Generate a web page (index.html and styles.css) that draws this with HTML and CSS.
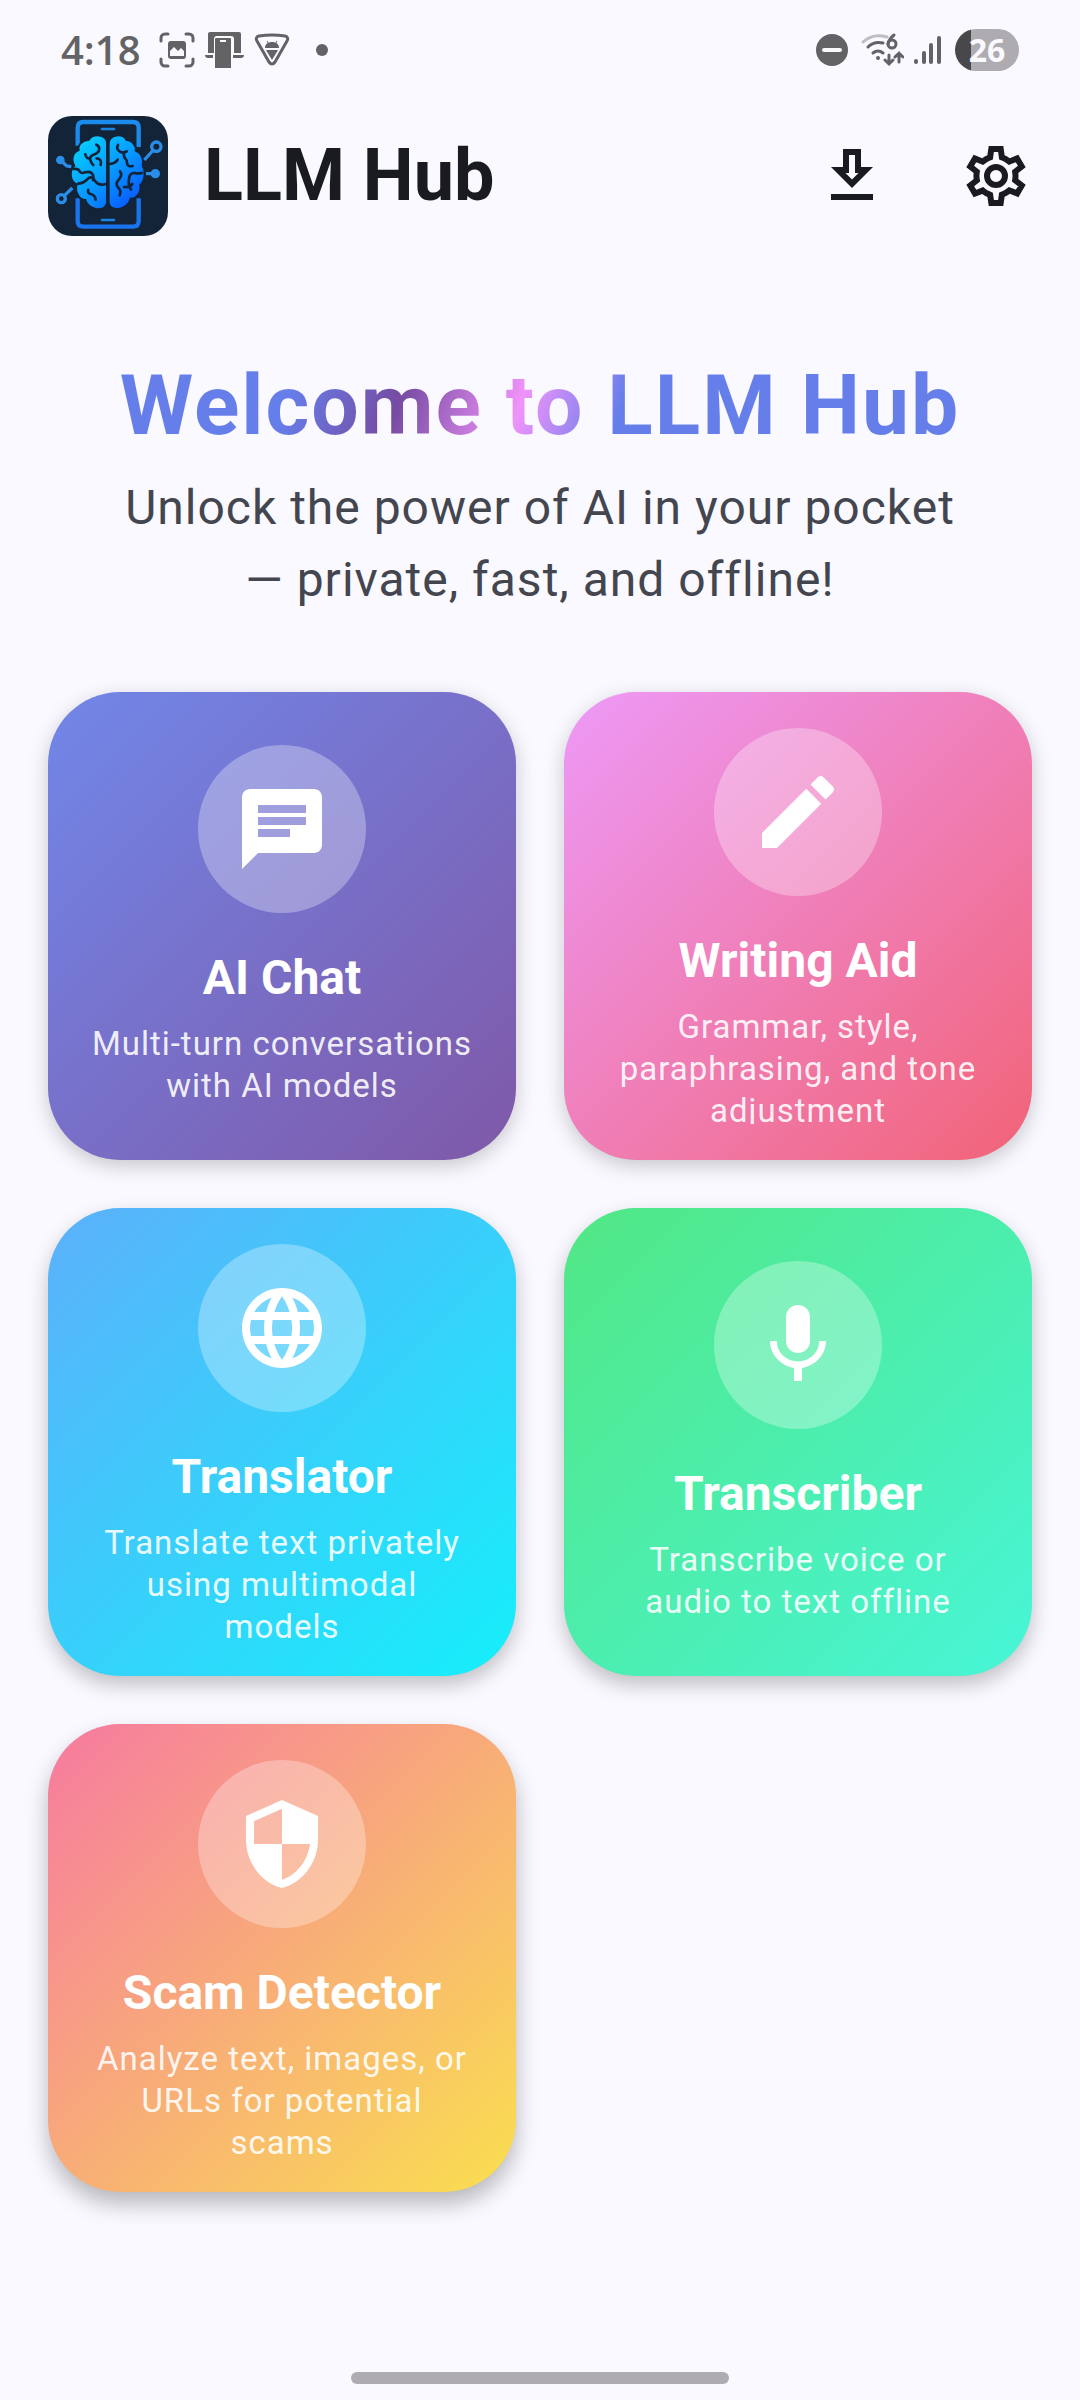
FILE: index.html
```html
<!DOCTYPE html>
<html lang="en">
<head>
<meta charset="utf-8">
<meta name="viewport" content="width=device-width, initial-scale=1">
<title>LLM Hub</title>
<link rel="stylesheet" href="styles.css">
</head>
<body>
<div class="status">
  <div class="status-group">
    <span class="clock">4:18</span>
    <svg width="36" height="36" viewBox="0 0 36 36" fill="none" stroke="currentColor" stroke-width="3" stroke-linecap="round" aria-hidden="true">
      <path d="M2 9V6a4 4 0 0 1 4-4h3M27 2h3a4 4 0 0 1 4 4v3M34 27v3a4 4 0 0 1-4 4h-3M9 34H6a4 4 0 0 1-4-4v-3"/>
      <path fill="currentColor" stroke="none" fill-rule="evenodd" d="M12 9h12a3 3 0 0 1 3 3v12a3 3 0 0 1-3 3H12a3 3 0 0 1-3-3V12a3 3 0 0 1 3-3zm-1 15h14v-5l-3-3-3 3-4-4-4 4z"/>
    </svg>
    <svg width="39" height="36" viewBox="0 0 39 36" fill="currentColor" aria-hidden="true">
      <path d="M5 0h29a2 2 0 0 1 2 2v19h-7V7a3 3 0 0 0-3-3H12a3 3 0 0 0-3 3v14H3V2a2 2 0 0 1 2-2zM0 23h8v3H3a3 3 0 0 1-3-3zM28 23h11a3 3 0 0 1-3 3h-8z"/>
      <path fill-rule="evenodd" d="M11 6h14a1 1 0 0 1 1 1v29H10V7a1 1 0 0 1 1-1zm4 2v2h6V8z"/>
    </svg>
    <svg width="36" height="34" viewBox="0 0 36 34" aria-hidden="true">
      <path fill="none" stroke="currentColor" stroke-width="3" stroke-linejoin="round" d="M5 3Q18 1 31 3Q35 4 33 8L21 29Q18 33 15 29L3 8Q1 4 5 3z"/>
      <path fill="currentColor" d="M11 15c0-4 3-6 7-6s7 2 7 6zM12 17h12l-6 10z"/>
      <path fill="none" stroke="currentColor" stroke-width="1" d="m13 8 2 3m8-3-2 3"/>
    </svg>
    <span class="dot"></span>
  </div>
  <div class="status-group">
    <svg width="32" height="32" viewBox="0 0 32 32" aria-hidden="true"><circle cx="16" cy="16" r="16" fill="currentColor"/><path d="M8 16h16" stroke="#f9f9ff" stroke-width="4" stroke-linecap="round"/></svg>
    <svg class="wifi" width="43" height="34" viewBox="0 0 43 34" fill="none" stroke="currentColor" stroke-width="3" stroke-linecap="round" aria-hidden="true">
      <path opacity=".4" d="M2 9Q12 0 26 4"/>
      <path d="M7 14Q13 8 22 10M12 20q5-4 10 0"/>
      <circle cx="17" cy="25" r="2" fill="currentColor" stroke="none"/>
      <path d="M33 2q-5 4-6 9"/><circle cx="31" cy="11" r="4"/>
      <path d="M28 22v9m-4-4 4 4 4-4M38 29v-9m-4 4 4-4 4 4"/>
    </svg>
    <svg width="27" height="32" viewBox="0 0 27 32" fill="none" stroke="currentColor" stroke-width="4" stroke-linecap="round" aria-hidden="true"><path d="M2 27v1M10 19v9M17 11v17M25 4v24"/></svg>
    <span class="battery">26</span>
  </div>
</div>

<header class="appbar">
  <svg class="logo" viewBox="24 33 360 360" aria-hidden="true">
    <defs>
      <linearGradient id="brain" gradientUnits="userSpaceOnUse" x1="110" y1="110" x2="280" y2="300"><stop offset="0" stop-color="#06d0ff"/><stop offset=".5" stop-color="#079cff"/><stop offset="1" stop-color="#0858ff"/></linearGradient>
    </defs>
    <path fill="#132338" d="M24 33h360v360H24z"/>
    <path fill="none" stroke="#1b8cec" stroke-width="13" d="M113 122V68q0-17 17-17H279q17 0 17 17V126"/>
    <path fill="none" stroke="#1a74ec" stroke-width="13" d="M113 280V348q0 17 17 17H279q17 0 17-17V280"/>
    <g fill="none" stroke="#1b84e0" stroke-width="8" stroke-linecap="round"><path d="M186 72h36M186 345h36"/></g>
    <g stroke="#132338" stroke-width="6" fill="url(#brain)">
      <path d="M201 115C201 86 158 84 146 105C128 103 112 122 116 135C98 142 92 164 103 182C86 200 90 230 110 238C103 260 118 285 136 285C140 312 194 326 201 294Z"/>
      <path d="M206 115C208 86 248 84 260 105C278 105 290 126 287 137C305 144 313 164 308 182C319 202 313 230 301 240C305 264 288 283 272 281C266 312 212 326 206 294Z"/>
    </g>
    <g fill="none" stroke="#132338" stroke-width="8" stroke-linecap="round" stroke-linejoin="round">
      <path d="M169 119q11 5 8 17-3 9-16 13-15 5-9 19 3 8 8 12M136 148q3 15 15 12M170 160q17 2 12 20M101 192q14-2 18 7 4 8 17 3 17-5 23 8 3 9 0 15M197 237q-22 7-34-12-11-16-23 0-12 11-25 11M145 255q-4 9 7 12 13 3 15 17"/>
      <path d="M234 120q-7 12 6 20 12 5 20-1M252 142q-2 14 5 20 5 4 4 13 2 11 17 8M209 177q18-2 24-13M306 204q-13 3-22 0-12-1-16 12-3 15-1 24M240 199q8 10-2 23-15 15-3 26 10 10 4 23M252 246q18 2 25-9M267 242l6 12"/>
    </g>
    <g fill="none" stroke="#2a8ee8" stroke-width="10">
      <path d="m61 165 19 18 14 2M97 249l-24 23M313 165l27-30M318 206h20"/>
      <circle cx="64" cy="281" r="12"/><circle cx="349" cy="125" r="14"/>
      <circle cx="61" cy="165" r="8" fill="#2a8ee8"/><circle cx="346" cy="206" r="9" fill="#2a8ee8"/>
    </g>
  </svg>
  <h1 class="brand">LLM Hub</h1>
  <button class="icon-button" type="button" aria-label="Download models">
    <svg viewBox="0 0 24 24" aria-hidden="true"><path fill="currentColor" d="M19 9h-4V3H9v6H5l7 7 7-7zm-8 2V5h2v6h1.170L12 13.170 9.830 11H11zm-6 7h14v2H5z"/></svg>
  </button>
  <button class="icon-button" type="button" aria-label="Settings">
    <svg viewBox="0 0 24 24" fill="none" stroke="currentColor" aria-hidden="true">
      <defs><path id="gear" d="M19.440 13c.050-.340.070-.660.070-1s-.030-.660-.070-.970l2.440-1.920-2.430-4.220-2.870 1.160c-.520-.400-1.090-.730-1.710-.980L14.440 2H9.570l-.440 3.070c-.620.260-1.190.600-1.710 1L4.550 4.890 2.110 9.110l2.440 1.920c-.040.330-.070.650-.070.970s.030.680.080 1l-2.440 1.910 2.430 4.200 2.880-1.150c.530.410 1.100.750 1.710 1L9.580 22h4.850l.440-3.070c.620-.260 1.200-.600 1.720-1l2.880 1.150 2.430-4.200z"/><clipPath id="gear-clip"><use href="#gear"/></clipPath></defs>
      <use href="#gear" stroke-width="4" clip-path="url(#gear-clip)"/>
      <circle cx="12" cy="12" r="3" stroke-width="2"/>
    </svg>
  </button>
</header>

<main class="content">
  <section class="hero">
    <h2 class="welcome">Welcome to LLM Hub</h2>
    <p class="tagline">Unlock the power of AI in your pocket — private, fast, and offline!</p>
  </section>
  <nav class="grid" aria-label="Features">
    <a class="card chat" href="#chat"><div class="card-body">
      <span class="badge"><svg viewBox="0 0 24 24" aria-hidden="true"><path d="M20 2H4c-1.100 0-2 .9-2 2v18l4-4h14c1.100 0 2-.9 2-2V4c0-1.100-.9-2-2-2zM6 9h12v2H6V9zm8 5H6v-2h8v2zm4-6H6V6h12v2z"/></svg></span>
      <h3 class="card-title">AI Chat</h3>
      <p class="card-text">Multi-turn conversations with AI models</p>
    </div></a>
    <a class="card writing" href="#writing"><div class="card-body">
      <span class="badge"><svg viewBox="0 0 24 24" aria-hidden="true"><path d="M3 17.250V21h3.750L17.810 9.940l-3.750-3.750L3 17.250zM20.710 7.040c.390-.390.390-1.020 0-1.410l-2.340-2.340c-.390-.390-1.020-.390-1.410 0l-1.830 1.830 3.750 3.750 1.830-1.830z"/></svg></span>
      <h3 class="card-title">Writing Aid</h3>
      <p class="card-text">Grammar, style, paraphrasing, and tone adjustment</p>
    </div></a>
    <a class="card translator" href="#translator"><div class="card-body">
      <span class="badge"><svg viewBox="0 0 24 24" aria-hidden="true"><path d="M11.99 2C6.47 2 2 6.48 2 12s4.470 10 9.990 10C17.520 22 22 17.520 22 12S17.520 2 11.990 2zm6.930 6h-2.950c-.320-1.250-.780-2.450-1.380-3.560 1.840.630 3.370 1.910 4.330 3.560zM12 4.040c.830 1.200 1.480 2.530 1.910 3.960h-3.820c.430-1.430 1.080-2.760 1.910-3.960zM4.260 14C4.100 13.360 4 12.690 4 12s.1-1.360.260-2h3.380c-.080.660-.140 1.320-.140 2 0 .680.060 1.340.140 2H4.260zm.820 2h2.950c.320 1.250.780 2.450 1.380 3.560-1.840-.630-3.370-1.900-4.330-3.560zm2.950-8H5.080c.960-1.660 2.490-2.930 4.330-3.560C8.810 5.550 8.350 6.750 8.030 8zM12 19.960c-.830-1.200-1.480-2.530-1.910-3.960h3.820c-.430 1.430-1.080 2.760-1.910 3.960zM14.340 14H9.660c-.090-.660-.160-1.320-.160-2 0-.680.070-1.350.160-2h4.680c.090.650.160 1.320.160 2 0 .680-.070 1.340-.160 2zm.250 5.560c.6-1.110 1.060-2.310 1.380-3.560h2.950c-.960 1.650-2.490 2.930-4.330 3.560zM16.360 14c.080-.660.140-1.320.140-2 0-.680-.060-1.340-.140-2h3.380c.160.640.260 1.310.260 2s-.1 1.360-.260 2h-3.380z"/></svg></span>
      <h3 class="card-title">Translator</h3>
      <p class="card-text">Translate text privately using multimodal models</p>
    </div></a>
    <a class="card transcriber" href="#transcriber"><div class="card-body">
      <span class="badge"><svg viewBox="0 0 24 24" aria-hidden="true"><path d="M12 14c1.660 0 3-1.340 3-3V5c0-1.660-1.340-3-3-3S9 3.340 9 5v6c0 1.660 1.340 3 3 3zm5.300-3c0 3-2.540 5.100-5.300 5.100S6.700 14 6.700 11H5c0 3.410 2.720 6.230 6 6.720V21h2v-3.280c3.280-.480 6-3.300 6-6.720h-1.700z"/></svg></span>
      <h3 class="card-title">Transcriber</h3>
      <p class="card-text">Transcribe voice or audio to text offline</p>
    </div></a>
    <a class="card scam" href="#scam"><div class="card-body">
      <span class="badge"><svg viewBox="0 0 24 24" aria-hidden="true"><path fill-rule="evenodd" d="M12 1 3 5v6c0 5.550 3.840 10.740 9 12 5.160-1.260 9-6.450 9-12V5zm0 2.190V12H5V6.300zM12 12h7c-.530 4.120-3.280 7.790-7 8.940z"/></svg></span>
      <h3 class="card-title">Scam Detector</h3>
      <p class="card-text">Analyze text, images, or URLs for potential scams</p>
    </div></a>
  </nav>
</main>
<div class="home-bar"></div>
</body>
</html>
```
FILE: styles.css
```css
* { box-sizing: border-box; }

body {
  display: flex;
  flex-direction: column;
  min-height: 100vh;
  margin: 0;
  background: #f9f9ff;
  color: #1a1b20;
  font-family: Roboto, sans-serif;
}

h1, h2, h3, p { margin: 0; }
svg { display: block; flex: none; }

/* System status bar */
.status {
  display: flex;
  justify-content: space-between;
  height: 80px;
  padding: 20px 61px 0;
  color: #636366;
}
.status-group { display: flex; align-items: center; gap: 10px; }
.clock {
  margin-right: 8px;
  font: 600 40px/48px "Open Sans", sans-serif;
}
.dot { width: 12px; height: 12px; margin-left: 16px; border-radius: 50%; background: currentColor; }
.wifi { margin-left: 3px; }
.battery {
  width: 64px;
  margin-left: 4px;
  border-radius: 21px;
  background: linear-gradient(90deg, #48484a 16px, #aeacb1 16px);
  color: #f9f9ff;
  font: 700 32px/42px "Open Sans", sans-serif;
  text-align: center;
}

/* App bar */
.appbar {
  display: flex;
  align-items: center;
  height: 192px;
  padding: 0 12px 0 48px;
}
.logo { width: 120px; height: 120px; border-radius: 24px; }
.brand { flex: 1; margin-left: 36px; font-size: 72px; line-height: 96px; font-weight: 700; }
.icon-button {
  display: grid;
  place-items: center;
  width: 144px;
  height: 144px;
  padding: 0;
  border: 0;
  background: none;
  color: inherit;
}
.icon-button svg { width: 72px; height: 72px; }

/* Welcome block */
.content { padding: 80px 48px; }
.hero { margin-bottom: 76px; text-align: center; }
.welcome {
  margin-bottom: 12px;
  background: linear-gradient(110deg, #667eea 25%, #764ba2 36%, #f093fb 48%, #667eea 58%);
  background-clip: text;
  -webkit-background-clip: text;
  color: transparent;
  font-size: 84px;
  line-height: 108px;
  font-weight: 700;
  letter-spacing: 2px;
}
.tagline {
  padding: 0 60px;
  color: #44464f;
  font-size: 48px;
  line-height: 72px;
  letter-spacing: 1px;
}

/* Feature cards */
.grid { display: grid; grid-template-columns: 1fr 1fr; gap: 48px; }
.card {
  display: flex;
  flex-direction: column;
  justify-content: center;
  aspect-ratio: 1;
  min-height: 0;
  padding: 36px;
  border-radius: 72px;
  background-color: #d4d4da;
  box-shadow: 0 6px 20px #00000034;
  color: #fff;
  text-align: center;
  text-decoration: none;
}
.card:nth-child(n+3) { box-shadow: 0 9px 20px #0000003c; }
.card:nth-child(n+5) { box-shadow: 0 12px 22px #00000044; }
.card-body {
  display: flex;
  flex-direction: column;
  align-items: center;
  min-height: 0;
  overflow: hidden;
}
.badge {
  display: grid;
  flex: none;
  place-items: center;
  width: 168px;
  height: 168px;
  margin-bottom: 36px;
  border-radius: 50%;
  background: #ffffff4d;
}
.badge svg { width: 96px; height: 96px; fill: #fff; }
.card-title { margin-bottom: 16px; font-size: 48px; line-height: 58px; font-weight: 700; }
.card-text {
  max-width: 386px;
  color: #ffffffe6;
  font-size: 33px;
  line-height: 42px;
  letter-spacing: 1px;
}

.chat { background-image: linear-gradient(135deg, #667eeae6, #764ba2e6); }
.writing { background-image: linear-gradient(135deg, #f093fbe6, #f5576ce6); }
.translator { background-image: linear-gradient(135deg, #4facfee6, #00f2fee6); }
.transcriber { background-image: linear-gradient(135deg, #43e97be6, #38f9d7e6); }
.scam { background-image: linear-gradient(135deg, #fa709ae6, #fee140e6); }

/* Gesture handle */
.home-bar {
  width: 35%;
  height: 12px;
  margin: auto auto 16px;
  border-radius: 6px;
  background: #aeacb1;
}
```
